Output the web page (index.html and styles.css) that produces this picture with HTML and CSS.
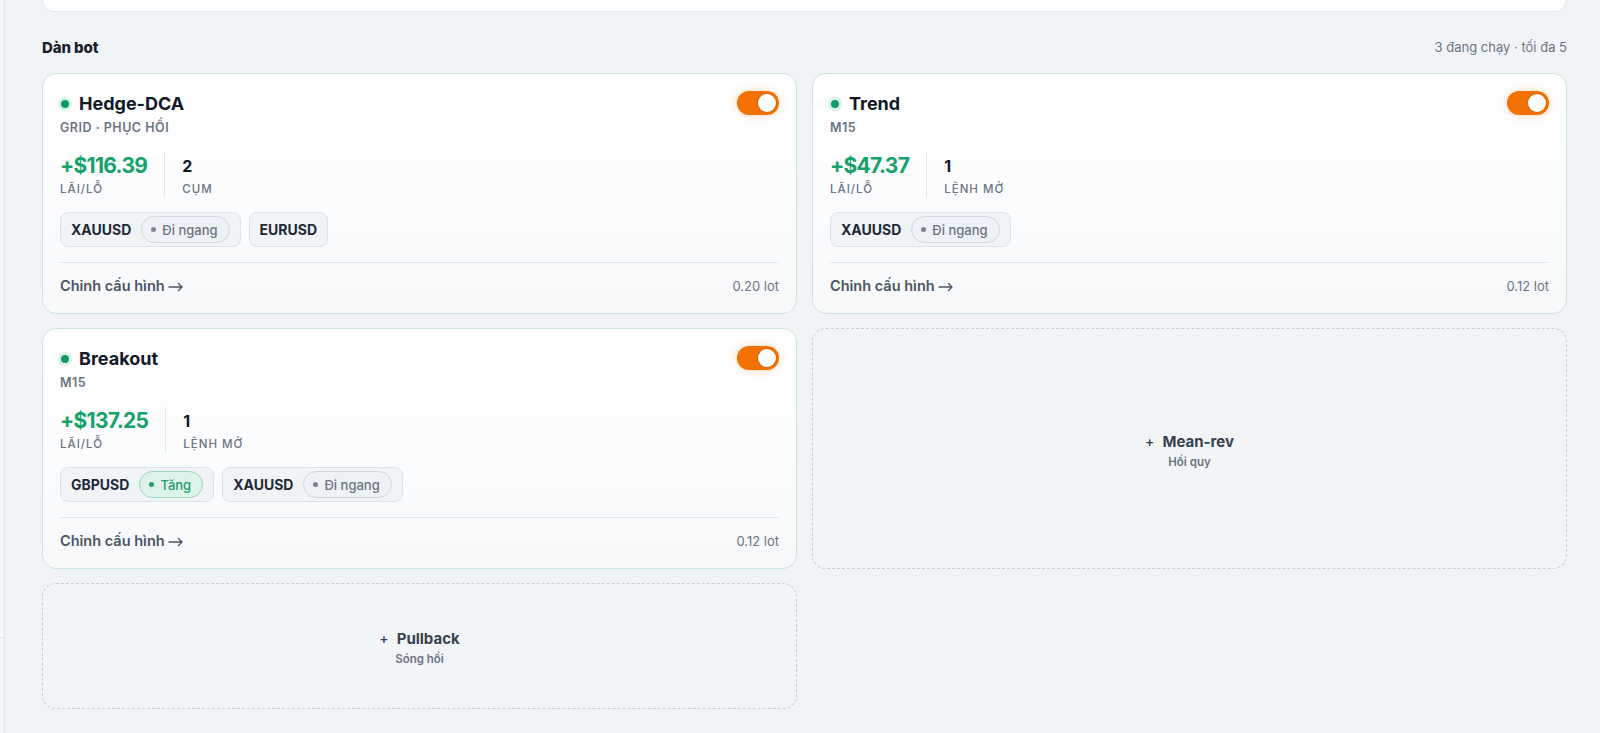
FILE: index.html
```
<!DOCTYPE html>
<html lang="vi">
<head>
<meta charset="utf-8">
<title>Dàn bot</title>
<link rel="stylesheet" href="styles.css">
</head>
<body>
<div class="app">
  <aside class="rail"><span class="rail-mark"></span></aside>
  <main class="main">
    <div class="summary-card"></div>

    <div class="section-head">
      <h2 class="section-title">Dàn bot</h2>
      <span class="section-meta">3 đang chạy · tối đa 5</span>
    </div>

    <div class="bot-grid">
      <article class="bot">
        <header class="bot-head">
          <div class="bot-id">
            <div class="bot-name"><span class="dot"></span>Hedge-DCA</div>
            <div class="bot-sub">GRID · PHỤC HỒI</div>
          </div>
          <span class="toggle"><span class="knob"></span></span>
        </header>
        <div class="stats">
          <div class="stat">
            <div class="pnl">+$116.39</div>
            <div class="lbl">LÃI/LỖ</div>
          </div>
          <div class="stat stat-sep">
            <div class="num">2</div>
            <div class="lbl">CỤM</div>
          </div>
        </div>
        <div class="chips">
          <span class="chip">XAUUSD <span class="trend"><span class="tdot"></span>Đi ngang</span></span>
          <span class="chip">EURUSD</span>
        </div>
        <footer class="bot-foot">
          <a class="cfg">Chỉnh cấu hình <svg class="arrow" viewBox="0 0 16 10" width="16" height="10"><path d="M1 5h13M10.5 1.5L14 5l-3.5 3.5"/></svg></a>
          <span class="lot">0.20 lot</span>
        </footer>
      </article>

      <article class="bot">
        <header class="bot-head">
          <div class="bot-id">
            <div class="bot-name"><span class="dot"></span>Trend</div>
            <div class="bot-sub">M15</div>
          </div>
          <span class="toggle"><span class="knob"></span></span>
        </header>
        <div class="stats">
          <div class="stat">
            <div class="pnl">+$47.37</div>
            <div class="lbl">LÃI/LỖ</div>
          </div>
          <div class="stat stat-sep">
            <div class="num">1</div>
            <div class="lbl">LỆNH MỞ</div>
          </div>
        </div>
        <div class="chips">
          <span class="chip">XAUUSD <span class="trend"><span class="tdot"></span>Đi ngang</span></span>
        </div>
        <footer class="bot-foot">
          <a class="cfg">Chỉnh cấu hình <svg class="arrow" viewBox="0 0 16 10" width="16" height="10"><path d="M1 5h13M10.5 1.5L14 5l-3.5 3.5"/></svg></a>
          <span class="lot">0.12 lot</span>
        </footer>
      </article>

      <article class="bot">
        <header class="bot-head">
          <div class="bot-id">
            <div class="bot-name"><span class="dot"></span>Breakout</div>
            <div class="bot-sub">M15</div>
          </div>
          <span class="toggle"><span class="knob"></span></span>
        </header>
        <div class="stats">
          <div class="stat">
            <div class="pnl">+$137.25</div>
            <div class="lbl">LÃI/LỖ</div>
          </div>
          <div class="stat stat-sep">
            <div class="num">1</div>
            <div class="lbl">LỆNH MỞ</div>
          </div>
        </div>
        <div class="chips">
          <span class="chip">GBPUSD <span class="trend up"><span class="tdot"></span>Tăng</span></span>
          <span class="chip">XAUUSD <span class="trend"><span class="tdot"></span>Đi ngang</span></span>
        </div>
        <footer class="bot-foot">
          <a class="cfg">Chỉnh cấu hình <svg class="arrow" viewBox="0 0 16 10" width="16" height="10"><path d="M1 5h13M10.5 1.5L14 5l-3.5 3.5"/></svg></a>
          <span class="lot">0.12 lot</span>
        </footer>
      </article>

      <button class="slot">
        <span class="slot-title"><span class="plus">+</span>Mean-rev</span>
        <span class="slot-sub">Hồi quy</span>
      </button>

      <button class="slot slot-short">
        <span class="slot-title"><span class="plus">+</span>Pullback</span>
        <span class="slot-sub">Sóng hồi</span>
      </button>
    </div>
  </main>
</div>
</body>
</html>
```

FILE: styles.css
```
* { box-sizing: border-box; }

html, body {
  margin: 0;
  height: 100%;
}

body {
  background: #f1f4f7;
  color: #111827;
  font-family: Inter, "Noto Sans", "Liberation Sans", sans-serif;
  overflow: hidden;
}

.app {
  display: flex;
  min-height: 100%;
}

/* thin edge of the collapsed side rail */
.rail {
  width: 5px;
  flex: none;
  background: #f4f6f9;
  border-right: 1px solid #e1e6ec;
  display: flex;
  flex-direction: column;
}

.rail-mark {
  display: block;
  margin-top: 637px;
  height: 1px;
  background: #dfe4ea;
}

.main {
  flex: 1;
  padding: 0 33px 0 37px;
}

.summary-card {
  height: 12px;
  background: #fff;
  border: 1px solid #e3e7ed;
  border-top: none;
  border-radius: 0 0 14px 14px;
}

.section-head {
  display: flex;
  align-items: center;
  justify-content: space-between;
  margin-top: 25px;
  height: 20px;
}

.section-title {
  margin: 0;
  font-size: 15px;
  font-weight: 800;
  color: #1a202c;
  letter-spacing: -0.1px;
}

.section-meta {
  font-size: 13px;
  color: #6b7482;
}

.bot-grid {
  display: grid;
  grid-template-columns: 1fr 1fr;
  column-gap: 15px;
  row-gap: 14px;
  margin-top: 16px;
}

.bot {
  background: linear-gradient(180deg, #ffffff 0%, #fbfcfd 55%, #f6f8fa 100%);
  border: 1px solid #cbe5da;
  border-radius: 14px;
  padding: 18px 17px 17px 17px;
  display: flex;
  flex-direction: column;
}

.bot-head {
  display: flex;
  justify-content: space-between;
  align-items: flex-start;
}

.bot-name {
  display: flex;
  align-items: center;
  gap: 10px;
  font-size: 18px;
  line-height: 24px;
  font-weight: 700;
  color: #111827;
  letter-spacing: 0;
}

.dot {
  width: 8px;
  height: 8px;
  border-radius: 50%;
  background: #129a68;
  box-shadow: 0 0 0 3px #dcf1e8;
  margin-left: 1px;
}

.bot-sub {
  margin-top: 4px;
  font-size: 12.5px;
  line-height: 16px;
  font-weight: 600;
  color: #6b7482;
  letter-spacing: 0.5px;
}

.toggle {
  width: 42px;
  height: 24px;
  margin-top: -1px;
  border-radius: 12px;
  background: #f37100;
  box-shadow: 0 0 10px rgba(243, 113, 0, 0.28);
  display: flex;
  align-items: center;
  justify-content: flex-end;
  padding-right: 3px;
}

.knob {
  width: 18px;
  height: 18px;
  border-radius: 50%;
  background: #fff;
  box-shadow: 0 0 0 1px rgba(180, 80, 0, 0.35);
}

.stats {
  display: flex;
  margin-top: 16px;
}

.stat {
  padding-right: 17px;
}

.stat-sep {
  border-left: 1px solid #e2e7ec;
  padding-left: 17px;
}

.pnl {
  font-size: 21px;
  line-height: 28px;
  font-weight: 700;
  color: #16a06a;
  letter-spacing: -0.7px;
}

.num {
  font-size: 16px;
  line-height: 28px;
  font-weight: 700;
  color: #111827;
}

.lbl {
  font-size: 11.5px;
  line-height: 16px;
  font-weight: 500;
  color: #6b7482;
  letter-spacing: 1px;
  padding-top: 1px;
  padding-bottom: 1px;
}

.chips {
  display: flex;
  gap: 8px;
  margin-top: 14px;
}

.chip {
  display: inline-flex;
  align-items: center;
  gap: 10px;
  height: 35px;
  padding: 0 10px;
  background: #f1f4f7;
  border: 1px solid #dce2e9;
  border-radius: 8px;
  font-size: 14px;
  font-weight: 700;
  color: #1f2937;
}

.trend {
  display: inline-flex;
  align-items: center;
  gap: 6px;
  height: 27px;
  padding: 0 11px 0 9px;
  border-radius: 14px;
  background: #eef1f5;
  border: 1px solid #cfd6de;
  font-size: 13px;
  font-weight: 500;
  color: #6b7482;
}

.tdot {
  width: 5px;
  height: 5px;
  border-radius: 50%;
  background: #7b8492;
}

.trend.up {
  background: #ddf2e8;
  border-color: #97d5b9;
  color: #249c6c;
}

.trend.up .tdot {
  background: #1f9d6a;
}

.bot-foot {
  display: flex;
  justify-content: space-between;
  align-items: center;
  margin-top: 15px;
  padding-top: 13px;
  border-top: 1px solid #e2e7ec;
  line-height: 20px;
}

.cfg {
  display: inline-flex;
  align-items: center;
  gap: 3px;
  font-size: 14.5px;
  font-weight: 600;
  color: #4b5563;
}

.arrow {
  fill: none;
  stroke: #4b5563;
  stroke-width: 1.4;
  stroke-linecap: round;
  stroke-linejoin: round;
  margin-top: 1px;
}

.lot {
  font-size: 13px;
  color: #6b7482;
}

.slot {
  font: inherit;
  background: #f2f5f8;
  border: 1px dashed #c6cdd5;
  border-radius: 14px;
  display: flex;
  flex-direction: column;
  align-items: center;
  justify-content: center;
  gap: 3px;
  padding: 5px 0 0;
}

.slot-short {
  height: 126px;
}

.slot-title {
  display: flex;
  align-items: center;
  gap: 8px;
  font-size: 15px;
  line-height: 18px;
  font-weight: 700;
  color: #374151;
}

.plus {
  font-weight: 500;
  font-size: 14px;
}

.slot-sub {
  font-size: 11.5px;
  line-height: 16px;
  font-weight: 600;
  color: #6b7482;
}
```
